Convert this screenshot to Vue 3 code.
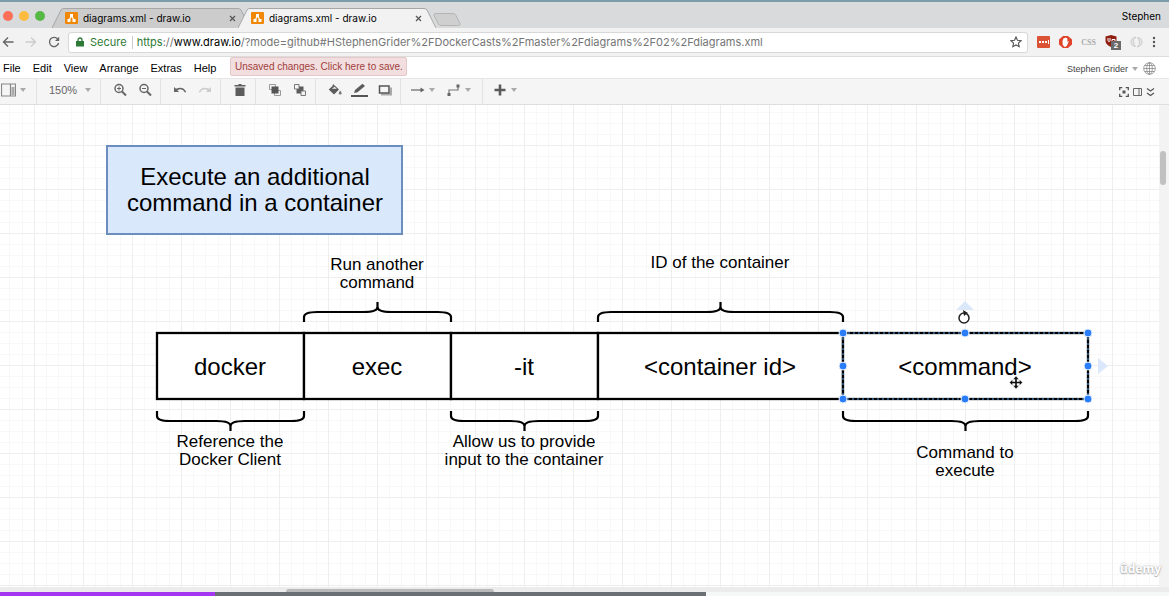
<script setup>
const menus = ['File', 'Edit', 'View', 'Arrange', 'Extras', 'Help']
const tabs = [
  { id: 1, title: 'diagrams.xml - draw.io', active: false },
  { id: 2, title: 'diagrams.xml - draw.io', active: true }
]

const cells = [
  { x: 157, w: 147, label: 'docker' },
  { x: 304, w: 147, label: 'exec' },
  { x: 451, w: 147, label: '-it' },
  { x: 598, w: 245, label: '<container id>' },
  { x: 843, w: 245, label: '<command>' }
]

// dir: -1 points up, 1 points down
const braces = [
  { x: 304, w: 147, y: 217, dir: -1 },
  { x: 598, w: 245, y: 217, dir: -1 },
  { x: 157, w: 147, y: 306, dir: 1 },
  { x: 451, w: 147, y: 306, dir: 1 },
  { x: 843, w: 245, y: 306, dir: 1 }
]

const notes = [
  { x: 377, y: 165, lines: ['Run another', 'command'] },
  { x: 720, y: 163, lines: ['ID of the container'] },
  { x: 230, y: 342, lines: ['Reference the', 'Docker Client'] },
  { x: 524, y: 342, lines: ['Allow us to provide', 'input to the container'] },
  { x: 965, y: 353, lines: ['Command to', 'execute'] }
]

const handles = [
  [843, 228], [965, 228], [1088, 228],
  [843, 261], [1088, 261],
  [843, 294], [965, 294], [1088, 294]
]

function bracePath({ x, w, y, dir }) {
  const bar = y + 10 * dir
  const mid = x + w / 2
  const end = x + w
  return [
    `M${x} ${y} V${y + 5 * dir} Q${x} ${bar} ${x + 13} ${bar}`,
    `H${mid - 14} Q${mid} ${bar} ${mid} ${bar + 5 * dir}`,
    `V${bar + 10 * dir} V${bar + 5 * dir}`,
    `Q${mid} ${bar} ${mid + 14} ${bar} H${end - 13}`,
    `Q${end} ${bar} ${end} ${y + 5 * dir} V${y}`
  ].join(' ')
}
</script>

<template>
  <div class="window">
    <header class="tabstrip">
      <div class="lights">
        <button class="light red" aria-label="Close"></button>
        <button class="light yellow" aria-label="Minimize"></button>
        <button class="light green" aria-label="Zoom"></button>
      </div>
      <div v-for="tab in tabs" :key="tab.id" class="tab" :class="{ active: tab.active }">
        <svg class="tab-shape" viewBox="0 0 198 20" preserveAspectRatio="none" aria-hidden="true">
          <path d="M0 20 L9 2 Q10 .5 12 .5 H186 Q188 .5 189 2 L198 20" />
        </svg>
        <svg class="favicon" viewBox="0 0 13 12" aria-hidden="true">
          <rect width="13" height="12" rx="1" fill="#f08705" />
          <path d="M6.5 4 L4 8 M6.5 4 L9 8" stroke="#fff" stroke-width="1.2" />
          <path d="M5 2h3v3H5z M2.500 7h3v3h-3z M7.500 7h3v3h-3z" fill="#fff" />
        </svg>
        <span class="tab-title">{{ tab.title }}</span>
        <button class="tab-close" aria-label="Close tab">
          <svg width="7" height="7" viewBox="0 0 7 7"><path d="M1 1l5 5M6 1L1 6" stroke="#555" stroke-width="1.2" /></svg>
        </button>
      </div>
      <button class="new-tab" aria-label="New tab">
        <svg width="28" height="13" viewBox="0 0 28 13"><path d="M3 .5h17q2 0 3 2l4 8q.5 2-1.500 2H8q-2 0-3-2l-4-8q-.5-2 2-2z" fill="#cfcfcf" stroke="#b4b4b4" /></svg>
      </button>
      <span class="profile">Stephen</span>
    </header>

    <div class="address-row">
      <nav class="history">
        <button aria-label="Back"><svg width="12" height="12" viewBox="0 0 12 12"><path d="M11.500 6H1.500M6 1.500L1.500 6 6 10.500" fill="none" stroke="#666" stroke-width="1.400" /></svg></button>
        <button aria-label="Forward"><svg width="12" height="12" viewBox="0 0 12 12"><path d="M.5 6h10M6 1.500L10.500 6 6 10.500" fill="none" stroke="#ccc" stroke-width="1.400" /></svg></button>
        <button aria-label="Reload"><svg width="12" height="12" viewBox="0 0 12 12"><path d="M10 3.500A4.600 4.600 0 1 0 10.600 7" fill="none" stroke="#666" stroke-width="1.400" /><path d="M11.200.8v4.200H7z" fill="#666" /></svg></button>
      </nav>
      <div class="omnibox">
        <svg class="lock" width="8" height="10" viewBox="0 0 8 10" aria-hidden="true"><path d="M0 4h8v5.500H0z" fill="#2c7a35" /><path d="M2 4.500V3a2 2 0 0 1 4 0v1.500" fill="none" stroke="#2c7a35" stroke-width="1.300" /></svg>
        <span class="secure">Secure</span>
        <div class="url" role="textbox" contenteditable="true" spellcheck="false" aria-label="Address"><span class="scheme">https</span>://<span class="host">www.draw.io</span>/?mode=github#HStephenGrider%2FDockerCasts%2Fmaster%2Fdiagrams%2F02%2Fdiagrams.xml</div>
        <button class="star" aria-label="Bookmark this page">
          <svg width="12" height="12" viewBox="0 0 12 12"><path d="M6 1l1.500 3.300 3.600.4-2.700 2.400.8 3.600L6 8.900l-3.200 1.800.8-3.600L.9 4.700l3.600-.4z" fill="none" stroke="#555" stroke-width="1.100" /></svg>
        </button>
      </div>
      <div class="extensions">
        <button aria-label="Password manager"><svg width="13" height="12" viewBox="0 0 13 12"><rect width="13" height="12" rx="1" fill="#dc5234" /><path d="M2 5h2v2H2zM5 5h2v2H5zM8 5h2v2H8zM11 4h1v4h-1z" fill="#fff" /></svg></button>
        <button aria-label="Ad blocker"><svg width="13" height="12" viewBox="0 0 13 12"><path d="M4 0h5l4 3.500v5L9 12H4L0 8.500v-5z" fill="#e0452c" /><path d="M3.500 5l1-2.500.6-.5.6.2.6-.7.8.6.8-.2.5 1V6l.8-.8.6.3L8 9.500l-1.200 1.300H5.300L3.700 8.800z" fill="#fff" /></svg></button>
        <button class="css" aria-label="CSS viewer">CSS</button>
        <button class="shield" aria-label="Content blocker">
          <svg width="16" height="16" viewBox="0 0 16 16"><path d="M6 1l5.500 1.500v4.500q0 3.500-5.500 6Q.5 10.500.5 7V2.500z" fill="#8f1f10" /><path d="M3 4v2.500q0 1 1 1t1-1V4M7 5.500h3v2H7z" fill="none" stroke="#fff" /><rect x="6" y="7" width="10" height="9" fill="#6a6a6a" /><text x="11" y="14" font-size="8" font-weight="700" text-anchor="middle" fill="#fff">2</text></svg>
        </button>
        <button aria-label="Sync"><svg width="13" height="12" viewBox="0 0 13 12"><path d="M5.500 10.500Q1 10 1 6t5-5Q3 3.500 3.500 6t2 4.500zM7.500 1.500Q12 2 12 6t-5 5Q10 8.500 9.500 6t-2-4.500z" fill="#e4e4e4" stroke="#cdcdcd" /></svg></button>
        <button aria-label="Browser menu"><svg width="4" height="12" viewBox="0 0 4 12"><g fill="#555"><circle cx="2" cy="2" r="1.200" /><circle cx="2" cy="6" r="1.200" /><circle cx="2" cy="10" r="1.200" /></g></svg></button>
      </div>
    </div>

    <div class="menubar">
      <nav class="menus">
        <button v-for="menu in menus" :key="menu">{{ menu }}</button>
      </nav>
      <button class="unsaved">Unsaved changes. Click here to save.</button>
      <div class="account">
        <button class="user">Stephen Grider <i class="caret"></i></button>
        <button aria-label="Language"><svg width="13" height="13" viewBox="0 0 13 13"><g fill="none" stroke="#8a8a8a" stroke-width=".8"><circle cx="6.500" cy="6.500" r="5.800" /><ellipse cx="6.500" cy="6.500" rx="2.800" ry="5.800" /><path d="M.7 6.500h11.600M6.500.7v11.600M1.600 3.500h9.800M1.600 9.500h9.800" /></g></svg></button>
      </div>
    </div>

    <div class="toolbar">
      <div class="group view">
        <button class="wide" aria-label="View"><svg width="15" height="14" viewBox="0 0 15 14"><path d="M.5 1h14v12H.5z M9.500 1v12" fill="#f5f5f5" stroke="#888" stroke-width="1.200" /><path d="M10.500 4h3v8h-3z" fill="#aaa" /></svg><i class="caret"></i></button>
      </div>
      <div class="group scale">
        <button>150%<i class="caret"></i></button>
      </div>
      <div class="group">
        <button aria-label="Zoom in"><svg width="14" height="14" viewBox="0 0 14 14"><circle cx="6" cy="5.500" r="4" fill="none" stroke="#666" stroke-width="1.500" /><path d="M9 8.500l4 4" stroke="#666" stroke-width="2" /><path d="M4 5.500h4M6 3.500v4" stroke="#666" /></svg></button>
        <button aria-label="Zoom out"><svg width="14" height="14" viewBox="0 0 14 14"><circle cx="6" cy="5.500" r="4" fill="none" stroke="#666" stroke-width="1.500" /><path d="M9 8.500l4 4" stroke="#666" stroke-width="2" /><path d="M4 5.500h4" stroke="#666" /></svg></button>
      </div>
      <div class="group">
        <button aria-label="Undo"><svg width="14" height="14" viewBox="0 0 14 14"><path d="M1 4v5h5L4.400 7.300Q9 4.500 12 9.500l1.300-.6Q10 2.500 3 5.800z" fill="#666" /></svg></button>
        <button aria-label="Redo"><svg width="14" height="14" viewBox="0 0 14 14"><path d="M13 4v5H8l1.600-1.700Q5 4.500 2 9.500L.7 8.900Q4 2.500 11 5.800z" fill="#ccc" /></svg></button>
      </div>
      <div class="group">
        <button aria-label="Delete"><svg width="14" height="14" viewBox="0 0 14 14"><path d="M1.500 2h3.500l1-1h2l1 1h3.500v1.500h-11zM2.500 4.500h9V13h-9z" fill="#5c5c5c" /></svg></button>
      </div>
      <div class="group">
        <button aria-label="To front"><svg width="14" height="14" viewBox="0 0 14 14"><path d="M1.500 1.500h6v5h-6zM6.500 7.500h6v5h-6z" fill="#f5f5f5" stroke="#999" /><path d="M3.500 3.500h7v7h-7z" fill="#555" /></svg></button>
        <button aria-label="To back"><svg width="14" height="14" viewBox="0 0 14 14"><path d="M3.500 3.500h7v7h-7z" fill="#5c5c5c" /><path d="M1.500 1.500h4.500v4.500H1.500zM8 8h4.500v4.500H8z" fill="#f5f5f5" stroke="#777" /></svg></button>
      </div>
      <div class="group">
        <button aria-label="Fill color"><svg width="14" height="14" viewBox="0 0 14 14"><path d="M5 1l6 5.500-5 5L.7 6.500 4.500 3z" fill="#5c5c5c" /><path d="M4 5.800l2.500-2 2.200 2z" fill="#f5f5f5" /><path d="M12.200 7.500q3 4 0 4t0-4z" fill="#777" /></svg></button>
        <button aria-label="Line color"><svg width="17" height="15" viewBox="0 0 17 15"><path d="M3 10l1-3L11.500.8 14 3 6.500 9.300z" fill="#5c5c5c" /><path d="M0 12h17v2H0z" fill="#555" /></svg></button>
        <button aria-label="Shadow"><svg width="14" height="14" viewBox="0 0 14 14"><path d="M3 11.500h10V4.500" fill="none" stroke="#aaa" stroke-width="2" /><path d="M1.500 3h9.500v7H1.500z" fill="#f5f5f5" stroke="#555" stroke-width="1.500" /></svg></button>
      </div>
      <div class="group">
        <button class="wide" aria-label="Connection"><svg width="14" height="14" viewBox="0 0 14 14"><path d="M0 7h11" stroke="#666" stroke-width="1.200" /><path d="M9.500 4.500L13.500 7l-4 2.500z" fill="#666" /></svg><i class="caret"></i></button>
        <button class="wide" aria-label="Waypoints"><svg width="14" height="14" viewBox="0 0 14 14"><path d="M2 11V7h9V3" fill="none" stroke="#777" stroke-width="1.200" /><path d="M.5 10h3v3h-3zM9.500 1.500h3v3h-3z" fill="#666" /></svg><i class="caret"></i></button>
      </div>
      <div class="group last">
        <button class="wide" aria-label="Insert"><svg width="14" height="14" viewBox="0 0 14 14"><path d="M7 1.500v11M1.500 7h11" stroke="#5a5a5a" stroke-width="2.600" /></svg><i class="caret"></i></button>
      </div>
      <div class="panel-tools">
        <button aria-label="Fullscreen"><svg width="10" height="10" viewBox="0 0 10 10"><path d="M.7 3.300V.7h2.600M6.700.7h2.600v2.600M9.300 6.700v2.600H6.700M3.300 9.300H.7V6.700" fill="none" stroke="#555" stroke-width="1.300" /><path d="M3.500 3.500h3v3h-3z" fill="#555" /></svg></button>
        <button aria-label="Format panel"><svg width="9" height="10" viewBox="0 0 9 10"><path d="M.5 1.500h8v7h-8zM6 1.500v7" fill="none" stroke="#666" /></svg></button>
        <button aria-label="Collapse"><svg width="9" height="10" viewBox="0 0 9 10"><path d="M1 1.500L4.500 4 8 1.500M1 6l3.500 2.500L8 6" fill="none" stroke="#555" stroke-width="1.300" /></svg></button>
      </div>
    </div>

    <main class="workspace">
      <div class="canvas">
        <svg class="diagram" role="img" aria-label="Diagram of docker exec">
          <defs>
            <pattern id="grid" x="34" y="40" width="49" height="44" patternUnits="userSpaceOnUse">
              <path d="M12.500 0v44M24.500 0v44M37.500 0v44M0 11.500h49M0 22.500h49M0 33.500h49" stroke="#f8f8f8" />
              <path d="M.5 0v44M0 .5h49" stroke="#eeeeee" />
            </pattern>
          </defs>
          <rect width="100%" height="100%" fill="url(#grid)" />

          <rect x="107" y="41" width="295" height="88" fill="#dae8fc" stroke="#6c8ebf" stroke-width="2" />
          <text class="big" x="255" y="80">Execute an additional</text>
          <text class="big" x="255" y="106">command in a container</text>

          <g v-for="cell in cells" :key="cell.x">
            <rect :x="cell.x" y="228" :width="cell.w" height="66" fill="#fff" stroke="#000" stroke-width="2.300" />
            <text class="big" :x="cell.x + (cell.w - 1) / 2" y="270">{{ cell.label }}</text>
          </g>

          <path v-for="brace in braces" :key="brace.x + '-' + brace.dir" :d="bracePath(brace)" fill="none" stroke="#000" stroke-width="2.200" />

          <g v-for="note in notes" :key="note.x">
            <text v-for="(line, i) in note.lines" :key="line" class="small" :x="note.x" :y="note.y + i * 18">{{ line }}</text>
          </g>

          <g>
            <rect x="843" y="228" width="245" height="66" fill="none" stroke="#4f9fe6" stroke-dasharray="2 3" />
            <circle v-for="[x, y] in handles" :key="x + '-' + y" :cx="x" :cy="y" r="4" fill="#2a7dfb" stroke="#e6f0ff" />
            <path d="M956 205l9-9 9 9zM1098 253l10 8-10 8z" fill="#dbe7fb" />
            <circle cx="964" cy="213" r="5" fill="#fff" stroke="#222" stroke-width="1.500" />
            <path d="M963 205l5 3-4 3z" fill="#222" />
            <path d="M1016 271l3 3.500h-2v2h2.500v-2l3 3-3 3v-2H1017v2h2l-3 3.500-3-3.500h2v-2h-2.500v2l-3-3 3-3v2h2.500v-2h-2z" fill="#111" stroke="#fff" stroke-width=".4" />
          </g>
        </svg>
      </div>
      <div class="vscroll"><div class="vthumb"></div></div>
      <span class="watermark">ûdemy</span>
    </main>
    <div class="hscroll"><div class="hthumb"></div></div>
    <div class="player"><div class="buffered"><div class="played"></div></div></div>
  </div>
</template>

<style>
body {
  margin: 0;
}
</style>

<style scoped>
.window {
  display: flex;
  flex-direction: column;
  height: 100vh;
  overflow: hidden;
  background: #fff;
  font-family: "Liberation Sans", Arial, sans-serif;
  font-size: 11px;
  color: #000;
}
button {
  display: flex;
  align-items: center;
  padding: 0;
  border: 0;
  background: none;
  font: inherit;
  color: inherit;
}
svg {
  display: block;
  flex: none;
}
.caret {
  border: 3px solid transparent;
  border-top: 4px solid #aaa;
  border-bottom: 0;
}

.tabstrip {
  display: flex;
  align-items: flex-end;
  box-sizing: border-box;
  height: 28px;
  border-top: 2px solid #7b9cab;
  background: #d9dadb;
  font-family: Inter, sans-serif;
  font-size: 10px;
}
.lights {
  display: flex;
  gap: 6px;
  width: 49px;
  padding: 0 0 7px 3px;
}
.light {
  width: 10px;
  height: 10px;
  border-radius: 50%;
}
.red { background: #fb6e57; }
.yellow { background: #fdbc40; }
.green { background: #57b846; }
.tab {
  position: relative;
  display: flex;
  align-items: center;
  box-sizing: border-box;
  width: 198px;
  height: 20px;
  padding: 0 14px 0 13px;
  margin-right: -12px;
}
.tab.active {
  z-index: 1;
}
.tab-shape {
  position: absolute;
  inset: 0;
  width: 100%;
  height: 100%;
  fill: #cccccc;
  stroke: #a6a6a6;
}
.tab.active .tab-shape {
  fill: #f2f2f2;
}
.favicon {
  position: relative;
  width: 13px;
  height: 12px;
}
.tab-title {
  position: relative;
  flex: 1;
  margin-left: 5px;
  white-space: nowrap;
}
.tab-close {
  position: relative;
}
.new-tab {
  margin: 0 0 2px 9px;
}
.profile {
  margin: 0 8px 6px auto;
}

.address-row {
  display: flex;
  align-items: center;
  height: 29px;
  background: #f2f2f2;
  border-bottom: 1px solid #dcdcdc;
  box-sizing: border-box;
}
.history {
  display: flex;
  gap: 11px;
  width: 66px;
  padding-left: 2px;
}
.omnibox {
  display: flex;
  flex: 1;
  align-items: center;
  height: 19px;
  padding: 0 5px 0 7px;
  border: 1px solid #d8d8d8;
  border-radius: 3px;
  background: #fff;
  font-family: Inter, sans-serif;
  font-size: 11px;
  line-height: 13px;
}
.secure {
  padding: 0 5px 0 6px;
  border-right: 1px solid #ccc;
  color: #2c7a35;
}
.url {
  flex: 1;
  padding-left: 4px;
  color: #757575;
  white-space: nowrap;
}
.scheme { color: #2c7a35; }
.host { color: #000; }
.extensions {
  display: flex;
  align-items: center;
  gap: 9px;
  padding: 0 13px 0 9px;
}
.css {
  font-family: "Liberation Serif", serif;
  font-size: 8px;
  font-weight: 700;
  color: #aaa;
}
.shield text {
  font-family: "Liberation Sans", sans-serif;
}

.menubar {
  display: flex;
  align-items: center;
  height: 21px;
}
.menus {
  display: flex;
  gap: 12px;
  width: 227px;
  padding-left: 3px;
}
.unsaved {
  height: 19px;
  padding: 0 3px 0 4px;
  margin-bottom: 2px;
  border: 1px solid #e6c8c8;
  border-radius: 2px;
  background: #f2dede;
  font-size: 10px;
  color: #a0403c;
}
.account {
  display: flex;
  align-items: center;
  gap: 5px;
  margin-left: auto;
  padding: 2px 13px 0 0;
}
.user {
  gap: 4px;
  font-size: 9px;
  color: #444;
}

.toolbar {
  display: flex;
  align-items: stretch;
  box-sizing: border-box;
  height: 27px;
  border-top: 1px solid #e6e6e6;
  border-bottom: 1px solid #dedede;
  background: #f5f5f5;
}
.group {
  display: flex;
  align-items: center;
  padding: 0 3px 3px 6px;
  border-right: 1px solid #e2e2e2;
}
.group button {
  justify-content: center;
  width: 25px;
}
.group button.wide {
  justify-content: flex-start;
  gap: 4px;
  box-sizing: border-box;
  width: 36px;
  padding-left: 4px;
}
.group.view {
  padding: 0 0 3px;
}
.group.view button.wide {
  padding-left: 1px;
}
.group.scale {
  box-sizing: border-box;
  width: 64px;
  padding: 0 0 3px 12px;
  color: #666;
}
.group.scale button {
  gap: 8px;
  width: auto;
}
.group.last {
  border: 0;
}
.panel-tools {
  display: flex;
  align-items: center;
  gap: 4px;
  margin-left: auto;
  padding-right: 14px;
}

.workspace {
  position: relative;
  display: flex;
  flex: 1;
  min-height: 0;
}
.canvas {
  flex: 1;
  min-width: 0;
  overflow: hidden;
}
.diagram {
  width: 100%;
  height: 100%;
}
.diagram text {
  text-anchor: middle;
}
.big { font-size: 24px; }
.small { font-size: 17px; }
.watermark {
  position: absolute;
  right: 8px;
  bottom: 8px;
  font-family: "Noto Sans", sans-serif;
  font-size: 12px;
  font-weight: 700;
  line-height: 20px;
  color: #fff;
  text-shadow: 0 0 2px #999, 0 1px 1px #bbb;
}
.vscroll {
  width: 10px;
  padding-top: 46px;
  background: #f3f3f3;
}
.vthumb {
  width: 6px;
  height: 34px;
  margin-left: 1px;
  border-radius: 3px;
  background: #c1c1c1;
}
.hscroll {
  display: flex;
  align-items: flex-end;
  height: 5px;
  background: #ececec;
}
.hthumb {
  width: 208px;
  height: 3px;
  margin-left: 286px;
  border-radius: 3px 3px 0 0;
  background: #b9b9b9;
}
.player {
  height: 4px;
  background: #f6f7f7;
}
.buffered {
  width: 60.4%;
  height: 4px;
  background: #6a7073;
}
.played {
  width: 30.5%;
  height: 4px;
  background: #a435f0;
}
</style>
